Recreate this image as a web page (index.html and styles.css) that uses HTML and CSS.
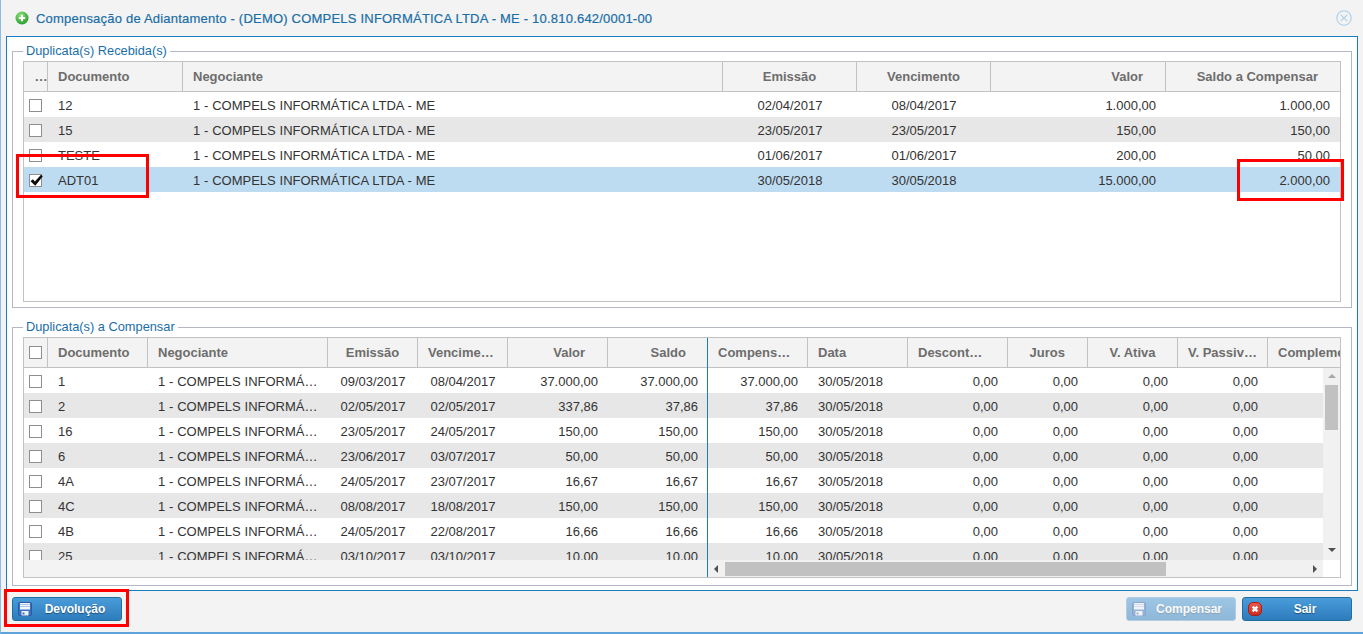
FILE: index.html
```html
<!DOCTYPE html>
<html lang="pt-BR">
<head>
<meta charset="utf-8">
<title>Compensação de Adiantamento</title>
<link rel="stylesheet" href="styles.css">
</head>
<body>
<div class="window">
  <header class="titlebar">
    <svg class="ico-title" viewBox="0 0 14 14"><defs><radialGradient id="g" cx="40%" cy="30%" r="75%"><stop offset="0" stop-color="#8fe27a"/><stop offset="1" stop-color="#1f9a2c"/></radialGradient></defs><circle cx="7" cy="7" r="6.5" fill="url(#g)"/><path d="M7 3.8v6.4M3.8 7h6.4" stroke="#fff" stroke-width="2"/></svg>
    <h1 class="title">Compensação de Adiantamento - (DEMO) COMPELS INFORMÁTICA LTDA - ME - 10.810.642/0001-00</h1>
    <svg class="ico-close" viewBox="0 0 16 16"><circle cx="8" cy="8" r="7.2" fill="none" stroke="#a9cfeb" stroke-width="1.1"/><path d="M4.8 4.8l6.4 6.4M11.2 4.8l-6.4 6.4" stroke="#a9cfeb" stroke-width="1.1"/></svg>
  </header>

  <main class="panel">
    <section class="fs fs1">
      <div class="legend">Duplicata(s) Recebida(s)</div>
      <div class="grid grid1">
        <div class="row head cols1">
          <div class="c dots">...</div><div class="c">Documento</div><div class="c">Negociante</div><div class="c ctr">Emissão</div><div class="c ctr">Vencimento</div><div class="c r hr">Valor</div><div class="c r hr">Saldo a Compensar</div>
        </div>
        <div class="row cols1"><div class="c"><span class="cb"></span></div><div class="c">12</div><div class="c">1 - COMPELS INFORMÁTICA LTDA - ME</div><div class="c ctr">02/04/2017</div><div class="c ctr">08/04/2017</div><div class="c r">1.000,00</div><div class="c r">1.000,00</div></div>
        <div class="row alt cols1"><div class="c"><span class="cb"></span></div><div class="c">15</div><div class="c">1 - COMPELS INFORMÁTICA LTDA - ME</div><div class="c ctr">23/05/2017</div><div class="c ctr">23/05/2017</div><div class="c r">150,00</div><div class="c r">150,00</div></div>
        <div class="row cols1"><div class="c"><span class="cb"></span></div><div class="c">TESTE</div><div class="c">1 - COMPELS INFORMÁTICA LTDA - ME</div><div class="c ctr">01/06/2017</div><div class="c ctr">01/06/2017</div><div class="c r">200,00</div><div class="c r">50,00</div></div>
        <div class="row sel cols1"><div class="c"><span class="cb"><svg class="tick" viewBox="0 0 13 13"><path d="M.5 7.2l2.4-1.9 2 2.2L11 .8l1.8 1.5L5.3 11.8z" fill="#0c0c0c"/></svg></span></div><div class="c">ADT01</div><div class="c">1 - COMPELS INFORMÁTICA LTDA - ME</div><div class="c ctr">30/05/2018</div><div class="c ctr">30/05/2018</div><div class="c r">15.000,00</div><div class="c r">2.000,00</div></div>
      </div>
    </section>

    <section class="fs fs2">
      <div class="legend">Duplicata(s) a Compensar</div>
      <div class="grid grid2">
        <div class="pane frozen">
          <div class="row head colsL"><div class="c"><span class="cb"></span></div><div class="c">Documento</div><div class="c">Negociante</div><div class="c ctr">Emissão</div><div class="c">Vencime…</div><div class="c r hr">Valor</div><div class="c r hr">Saldo</div></div>
          <div class="rows">
            <div class="row colsL"><div class="c"><span class="cb"></span></div><div class="c">1</div><div class="c">1 - COMPELS INFORMÁ…</div><div class="c ctr">09/03/2017</div><div class="c ctr">08/04/2017</div><div class="c r">37.000,00</div><div class="c r">37.000,00</div></div>
            <div class="row alt colsL"><div class="c"><span class="cb"></span></div><div class="c">2</div><div class="c">1 - COMPELS INFORMÁ…</div><div class="c ctr">02/05/2017</div><div class="c ctr">02/05/2017</div><div class="c r">337,86</div><div class="c r">37,86</div></div>
            <div class="row colsL"><div class="c"><span class="cb"></span></div><div class="c">16</div><div class="c">1 - COMPELS INFORMÁ…</div><div class="c ctr">23/05/2017</div><div class="c ctr">24/05/2017</div><div class="c r">150,00</div><div class="c r">150,00</div></div>
            <div class="row alt colsL"><div class="c"><span class="cb"></span></div><div class="c">6</div><div class="c">1 - COMPELS INFORMÁ…</div><div class="c ctr">23/06/2017</div><div class="c ctr">03/07/2017</div><div class="c r">50,00</div><div class="c r">50,00</div></div>
            <div class="row colsL"><div class="c"><span class="cb"></span></div><div class="c">4A</div><div class="c">1 - COMPELS INFORMÁ…</div><div class="c ctr">24/05/2017</div><div class="c ctr">23/07/2017</div><div class="c r">16,67</div><div class="c r">16,67</div></div>
            <div class="row alt colsL"><div class="c"><span class="cb"></span></div><div class="c">4C</div><div class="c">1 - COMPELS INFORMÁ…</div><div class="c ctr">08/08/2017</div><div class="c ctr">18/08/2017</div><div class="c r">150,00</div><div class="c r">150,00</div></div>
            <div class="row colsL"><div class="c"><span class="cb"></span></div><div class="c">4B</div><div class="c">1 - COMPELS INFORMÁ…</div><div class="c ctr">24/05/2017</div><div class="c ctr">22/08/2017</div><div class="c r">16,66</div><div class="c r">16,66</div></div>
            <div class="row alt colsL"><div class="c"><span class="cb"></span></div><div class="c">25</div><div class="c">1 - COMPELS INFORMÁ…</div><div class="c ctr">03/10/2017</div><div class="c ctr">03/10/2017</div><div class="c r">10,00</div><div class="c r">10,00</div></div>
          </div>
          <div class="hfill"></div>
        </div>
        <div class="pane scroll">
          <div class="row head colsR"><div class="c">Compens…</div><div class="c">Data</div><div class="c">Descont…</div><div class="c r hr">Juros</div><div class="c ctr">V. Ativa</div><div class="c">V. Passiv…</div><div class="c clip">Complemento</div></div>
          <div class="body">
            <div class="rows">
              <div class="row colsR"><div class="c r">37.000,00</div><div class="c">30/05/2018</div><div class="c r">0,00</div><div class="c r">0,00</div><div class="c r">0,00</div><div class="c r">0,00</div><div class="c"></div></div>
              <div class="row alt colsR"><div class="c r">37,86</div><div class="c">30/05/2018</div><div class="c r">0,00</div><div class="c r">0,00</div><div class="c r">0,00</div><div class="c r">0,00</div><div class="c"></div></div>
              <div class="row colsR"><div class="c r">150,00</div><div class="c">30/05/2018</div><div class="c r">0,00</div><div class="c r">0,00</div><div class="c r">0,00</div><div class="c r">0,00</div><div class="c"></div></div>
              <div class="row alt colsR"><div class="c r">50,00</div><div class="c">30/05/2018</div><div class="c r">0,00</div><div class="c r">0,00</div><div class="c r">0,00</div><div class="c r">0,00</div><div class="c"></div></div>
              <div class="row colsR"><div class="c r">16,67</div><div class="c">30/05/2018</div><div class="c r">0,00</div><div class="c r">0,00</div><div class="c r">0,00</div><div class="c r">0,00</div><div class="c"></div></div>
              <div class="row alt colsR"><div class="c r">150,00</div><div class="c">30/05/2018</div><div class="c r">0,00</div><div class="c r">0,00</div><div class="c r">0,00</div><div class="c r">0,00</div><div class="c"></div></div>
              <div class="row colsR"><div class="c r">16,66</div><div class="c">30/05/2018</div><div class="c r">0,00</div><div class="c r">0,00</div><div class="c r">0,00</div><div class="c r">0,00</div><div class="c"></div></div>
              <div class="row alt colsR"><div class="c r">10,00</div><div class="c">30/05/2018</div><div class="c r">0,00</div><div class="c r">0,00</div><div class="c r">0,00</div><div class="c r">0,00</div><div class="c"></div></div>
            </div>
            <div class="vbar"><span class="arrow up"></span><span class="vthumb"></span><span class="arrow down"></span></div>
            <div class="hbar"><span class="arrow left"></span><span class="htrack"><span class="hthumb"></span></span><span class="arrow right"></span></div>
            <div class="corner"></div>
          </div>
        </div>
      </div>
    </section>
  </main>

  <footer class="footer">
    <button class="btn" type="button">
      <svg class="ico-btn" viewBox="0 0 14 14"><rect x=".5" y=".5" width="13" height="13" rx="1.5" fill="#3a72c4" stroke="#2a5aa4"/><rect x="2" y="1" width="10" height="6.5" fill="#f2f6fb"/><path d="M2 2.5h10M2 4.5h10" stroke="#a9c4e6"/><rect x="3.5" y="9" width="7" height="4.5" fill="#eef3f9"/><rect x="4.5" y="10.5" width="2" height="2" fill="#3a72c4"/></svg>
      <span>Devolução</span>
    </button>
    <div class="spacer"></div>
    <button class="btn off" type="button">
      <svg class="ico-btn" viewBox="0 0 14 14"><rect x=".5" y=".5" width="13" height="13" rx="1.5" fill="#3a72c4" stroke="#2a5aa4"/><rect x="2" y="1" width="10" height="6.5" fill="#f2f6fb"/><path d="M2 2.5h10M2 4.5h10" stroke="#a9c4e6"/><rect x="3.5" y="9" width="7" height="4.5" fill="#eef3f9"/><rect x="4.5" y="10.5" width="2" height="2" fill="#3a72c4"/></svg>
      <span>Compensar</span>
    </button>
    <button class="btn" type="button">
      <svg class="ico-btn" viewBox="0 0 14 14"><defs><linearGradient id="r" x1="0" y1="0" x2="0" y2="1"><stop offset="0" stop-color="#ee5a4c"/><stop offset="1" stop-color="#c92a20"/></linearGradient></defs><rect x=".5" y=".5" width="13" height="13" rx="4.5" fill="url(#r)" stroke="#a81f18"/><path d="M4.6 4.6l4.8 4.8M9.4 4.6l-4.8 4.8" stroke="#fff" stroke-width="2.3"/></svg>
      <span>Sair</span>
    </button>
  </footer>

  <div class="mark m1"></div>
  <div class="mark m2"></div>
  <div class="mark m3"></div>
</div>
</body>
</html>
```

FILE: styles.css
```css
* { box-sizing: border-box; }
html, body { margin: 0; padding: 0; }
body { width: 1363px; height: 634px; overflow: hidden; font-family: "Liberation Sans", Arial, sans-serif; font-size: 13px; color: #333; }
.window { position: relative; width: 1363px; height: 634px; background: #f3f3f3; border-left: 1px solid #8dbce2; border-bottom: 2px solid #5fa3dc; display: flex; flex-direction: column; }
.titlebar { height: 36px; display: flex; align-items: center; padding: 0 11px 0 14px; }
.ico-title { width: 14px; height: 14px; margin-right: 7px; flex: none; }
.title { margin: 0; font-size: 13px; font-weight: normal; color: #1a6ea8; letter-spacing: .21px; flex: 1; white-space: nowrap; -webkit-text-stroke: .2px #1a6ea8; }
.ico-close { width: 16px; height: 16px; flex: none; }
.panel { width: 1352px; height: 555px; margin-left: 5px; background: #fff; border: 1px solid #1b7cc1; padding: 14px 5px 0; flex: none; }
.fs { position: relative; border: 1px solid #b4b8c6; padding: 9px 10px 0; width: 1340px; }
.fs1 { height: 257px; }
.fs2 { height: 259px; margin-top: 19px; }
.legend { position: absolute; top: -8px; left: 10px; padding: 0 3px; background: #fff; color: #1a6ea8; font-size: 12.8px; line-height: 13px; }
.grid { width: 1318px; height: 241px; border: 1px solid #c2c2c2; overflow: hidden; background: #fff; }
.grid2 { display: flex; background: #f3f3f3; }
.row { display: grid; height: 25px; align-items: center; white-space: nowrap; padding-top: 1px; word-spacing: .2px; }
.head { height: 30px; padding-top: 0; background: #f3f3f3; border-bottom: 1px solid #c2c2c2; font-weight: bold; color: #6d6d6d; word-spacing: 0; }
.head .c { height: 100%; line-height: 29px; border-right: 1px solid #c2c2c2; }
.head .c:last-child { border-right: 0; }
.cols1 { grid-template-columns: 24px 135px 540px 134px 134px 175px 174px; }
.colsL { grid-template-columns: 24px 100px 180px 90px 90px 100px 100px; }
.colsR { grid-template-columns: 100px 100px 100px 80px 90px 90px 100px; width: 680px; }
.alt { background: #e7e7e7; }
.sel { background: #bddbf1; }
.c { padding: 0 10px; overflow: hidden; min-width: 0; }
.c:first-child { padding: 0; }
.r { text-align: right; }
.c.hr { padding-right: 22px; }
.ctr { text-align: center; }
.head .dots { padding-left: 11px; letter-spacing: .6px; }
.cb { display: block; width: 13px; height: 13px; margin: 0 0 0 5px; background: #fff; border: 1px solid #8e8e8e; position: relative; }
.head .cb { margin-top: 8px; }
.tick { position: absolute; left: 0; top: -1px; width: 13px; height: 13px; }
.pane.frozen { width: 684px; flex: none; border-right: 1px solid #1b7cc1; display: flex; flex-direction: column; }
.pane.frozen .rows { height: 192px; overflow: hidden; background: #fff; }
.pane.scroll { flex: 1; overflow: hidden; display: flex; flex-direction: column; }
.pane.scroll .c:first-child { padding: 0 10px; }
.body { display: grid; grid-template-columns: 615px 17px; grid-template-rows: 192px 17px; }
.body .rows { height: 192px; overflow: hidden; background: #fff; }
.body .rows .row { width: 615px; }
.vbar { display: flex; flex-direction: column; align-items: center; background: #f1f1f1; padding-top: 6px; }
.vthumb { width: 13px; height: 45px; background: #c1c1c1; margin-top: 7px; }
.arrow { width: 0; height: 0; border: 4px solid transparent; flex: none; }
.up { border-bottom-color: #a8a8a8; border-top: 0; }
.down { border-top-color: #505050; border-bottom: 0; margin-top: auto; margin-bottom: 8px; }
.left { border-right-color: #505050; border-left: 0; margin-left: 6px; }
.right { border-left-color: #505050; border-right: 0; margin-right: 6px; }
.hbar { display: flex; align-items: center; background: #f1f1f1; }
.htrack { flex: 1; height: 14px; padding: 0 7px; }
.hthumb { display: block; width: 441px; height: 14px; background: #c1c1c1; }
.corner { background: #fff; }
.footer { flex: 1; display: flex; align-items: flex-start; padding: 6px 11px 0 11px; gap: 6px; }
.spacer { flex: 1; }
.btn { width: 110px; height: 24px; display: flex; align-items: center; padding: 0 3px 0 5px; border: 1px solid #20709f; border-radius: 3px; background: linear-gradient(#4a9cd9, #2d7cbd); color: #fff; font: bold 12px "Liberation Sans", Arial, sans-serif; text-shadow: 0 1px 1px rgba(0,0,0,.4); }
.btn span { flex: 1; text-align: center; }
.btn.off { opacity: .5; border-color: #6fa9d6; }
.ico-btn { width: 14px; height: 14px; flex: none; }
.mark { position: absolute; border: 3px solid #f00; pointer-events: none; }
.m1 { left: 15px; top: 154px; width: 133px; height: 44px; }
.m2 { left: 1236px; top: 159px; width: 107px; height: 42px; }
.m3 { left: 3px; top: 589px; width: 125px; height: 38px; }
```
